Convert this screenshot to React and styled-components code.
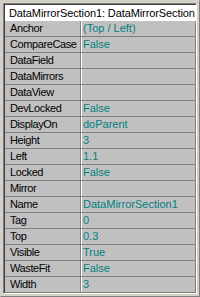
import styled, { createGlobalStyle } from "styled-components";

const GlobalStyle = createGlobalStyle`
  html, body {
    margin: 0;
    padding: 0;
    background: #d4d0c8;
  }
  body {
    font-family: "Liberation Sans", Arial, sans-serif;
  }
`;

const props = [
  ["Anchor", "(Top / Left)"],
  ["CompareCase", "False"],
  ["DataField", ""],
  ["DataMirrors", ""],
  ["DataView", ""],
  ["DevLocked", "False"],
  ["DisplayOn", "doParent"],
  ["Height", "3"],
  ["Left", "1.1"],
  ["Locked", "False"],
  ["Mirror", ""],
  ["Name", "DataMirrorSection1"],
  ["Tag", "0"],
  ["Top", "0.3"],
  ["Visible", "True"],
  ["WasteFit", "False"],
  ["Width", "3"],
];

export default function App() {
  return (
    <>
      <GlobalStyle />
      <Frame>
        <Inner>
          <Title>DataMirrorSection1: DataMirrorSection</Title>
          <Grid>
            {props.map(([name, value]) => (
              <Row key={name}>
                <Name>{name}</Name>
                <Value>{value}</Value>
              </Row>
            ))}
          </Grid>
        </Inner>
      </Frame>
    </>
  );
}

const Frame = styled.div`
  width: 200px;
  height: 297px;
  box-sizing: border-box;
  padding: 2px;
  background: #d4d0c8;
  border-top: 1px solid #d4d0c8;
  border-left: 1px solid #d4d0c8;
  border-right: 1px solid #808080;
  border-bottom: 1px solid #808080;
`;

const Inner = styled.div`
  height: 100%;
  box-sizing: border-box;
  border-top: 1px solid #808080;
  border-left: 1px solid #808080;
  border-right: 1px solid #ffffff;
  border-bottom: 1px solid #ffffff;
  display: flex;
  flex-direction: column;
`;

const Title = styled.div`
  height: 16px;
  background: #ffffff;
  border-top: 1px solid #404040;
  border-left: 1px solid #404040;
  padding-left: 4px;
  font-size: 11px;
  line-height: 16px;
  letter-spacing: -0.1px;
  color: #000;
  white-space: nowrap;
  overflow: hidden;
`;

const Grid = styled.div`
  display: flex;
  flex-direction: column;
  background: #c0c0c0;
  border-left: 1px solid #404040;
  border-right: 1px solid #808080;
`;

const Row = styled.div`
  display: grid;
  grid-template-columns: 76px 1fr;
  height: 16px;
  border-bottom: 1px solid #808080;
  box-sizing: border-box;
  font-size: 11px;
  line-height: 15px;
`;

const Name = styled.div`
  padding-left: 5px;
  color: #000;
  letter-spacing: -0.4px;
  border-right: 1px solid #808080;
  box-shadow: 1px 0 0 #ffffff;
  white-space: nowrap;
  overflow: hidden;
`;

const Value = styled.div`
  padding-left: 2px;
  color: #008080;
  white-space: nowrap;
`;
